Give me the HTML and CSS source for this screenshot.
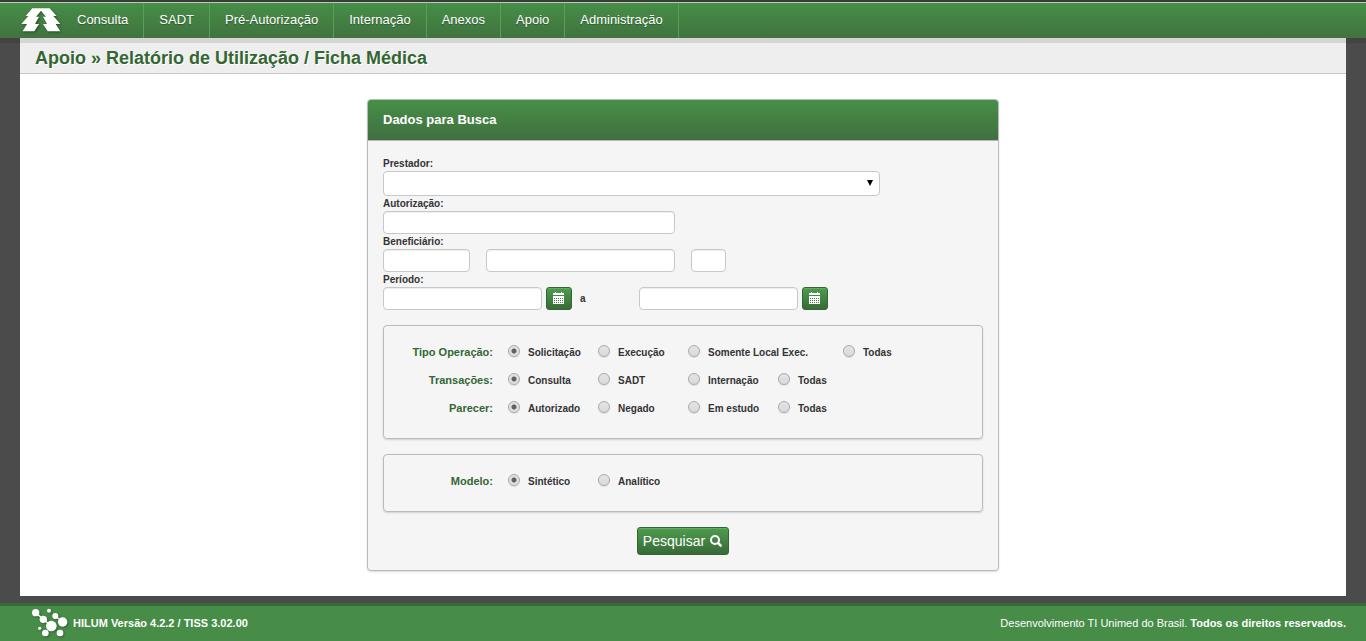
FILE: index.html
```html
<!DOCTYPE html>
<html lang="pt-BR">
<head>
<meta charset="utf-8">
<meta name="viewport" content="width=device-width, initial-scale=1">
<title>Relatório de Utilização / Ficha Médica</title>
<link rel="stylesheet" href="styles.css">
</head>
<body>
<header class="topbar">
  <a class="brand" href="#" aria-label="Início">
    <svg class="brand-logo" viewBox="0 0 120 72" aria-hidden="true">
      <path fill="#fff" d="M34 1H86L107 24H97L118 48H104L118 70H80L66 48H78L66 26H75L60 8L45 26H54L42 48H54L40 70H5L18 48H1L22 24H14Z"/>
    </svg>
  </a>
  <nav class="menu">
    <a href="#">Consulta</a>
    <a href="#">SADT</a>
    <a href="#">Pré-Autorização</a>
    <a href="#">Internação</a>
    <a href="#">Anexos</a>
    <a href="#">Apoio</a>
    <a href="#">Administração</a>
  </nav>
</header>

<main class="page">
  <h1 class="page-title">Apoio » Relatório de Utilização / Ficha Médica</h1>
  <form class="panel">
    <h2 class="panel-title">Dados para Busca</h2>
    <div class="panel-body">
      <label class="field-label" for="prestador">Prestador:</label>
      <div class="select-wrap">
        <select class="select" id="prestador"><option></option></select>
        <svg class="select-arrow" viewBox="0 0 6 6" aria-hidden="true"><path d="M0 0H6L3 6Z"/></svg>
      </div>
      <label class="field-label" for="autorizacao">Autorização:</label>
      <div class="field-row"><input class="input input-auth" id="autorizacao" type="text"></div>
      <label class="field-label" for="beneficiario">Beneficiário:</label>
      <div class="field-row field-row-wide">
        <input class="input input-unit" id="beneficiario" type="text">
        <input class="input input-card" type="text" aria-label="Número do beneficiário">
        <input class="input input-digit" type="text" aria-label="Dígito do beneficiário">
      </div>
      <label class="field-label" for="inicio">Período:</label>
      <div class="field-row">
        <input class="input input-date" id="inicio" type="text">
        <button class="btn btn-date" type="button" aria-label="Escolher data inicial">
          <svg class="icon-calendar" viewBox="0 0 11 12" aria-hidden="true" shape-rendering="crispEdges"><path fill="#fff" d="M0 1H2V0H3V1H8V0H9V1H11V3H0ZM0 4H11V12H0Z"/><path stroke="#3b7a3b" stroke-dasharray="1 1" d="M1 6.5H10M1 8.5H10M1 10.5H10"/></svg>
        </button>
        <label class="until" for="fim">a</label>
        <input class="input input-date" id="fim" type="text">
        <button class="btn btn-date" type="button" aria-label="Escolher data final">
          <svg class="icon-calendar" viewBox="0 0 11 12" aria-hidden="true" shape-rendering="crispEdges"><path fill="#fff" d="M0 1H2V0H3V1H8V0H9V1H11V3H0ZM0 4H11V12H0Z"/><path stroke="#3b7a3b" stroke-dasharray="1 1" d="M1 6.5H10M1 8.5H10M1 10.5H10"/></svg>
        </button>
      </div>

      <div class="box">
        <div class="options" role="radiogroup" aria-labelledby="g-op">
          <span class="options-title" id="g-op">Tipo Operação:</span>
          <label class="option"><input class="radio" type="radio" name="operacao" checked>Solicitação</label>
          <label class="option"><input class="radio" type="radio" name="operacao">Execução</label>
          <label class="option option-wide"><input class="radio" type="radio" name="operacao">Somente Local Exec.</label>
          <label class="option"><input class="radio" type="radio" name="operacao">Todas</label>
        </div>
        <div class="options" role="radiogroup" aria-labelledby="g-tr">
          <span class="options-title" id="g-tr">Transações:</span>
          <label class="option"><input class="radio" type="radio" name="transacoes" checked>Consulta</label>
          <label class="option"><input class="radio" type="radio" name="transacoes">SADT</label>
          <label class="option"><input class="radio" type="radio" name="transacoes">Internação</label>
          <label class="option"><input class="radio" type="radio" name="transacoes">Todas</label>
        </div>
        <div class="options" role="radiogroup" aria-labelledby="g-pa">
          <span class="options-title" id="g-pa">Parecer:</span>
          <label class="option"><input class="radio" type="radio" name="parecer" checked>Autorizado</label>
          <label class="option"><input class="radio" type="radio" name="parecer">Negado</label>
          <label class="option"><input class="radio" type="radio" name="parecer">Em estudo</label>
          <label class="option"><input class="radio" type="radio" name="parecer">Todas</label>
        </div>
      </div>

      <div class="box">
        <div class="options" role="radiogroup" aria-labelledby="g-mo">
          <span class="options-title" id="g-mo">Modelo:</span>
          <label class="option"><input class="radio" type="radio" name="modelo" checked>Sintético</label>
          <label class="option"><input class="radio" type="radio" name="modelo">Analítico</label>
        </div>
      </div>

      <div class="actions">
        <button class="btn btn-search" type="submit">Pesquisar
          <svg class="icon-search" viewBox="0 0 12 12" aria-hidden="true"><circle cx="5" cy="5" r="4" fill="none" stroke="#fff" stroke-width="2"/><path stroke="#fff" stroke-width="2.4" stroke-linecap="round" d="M8.2 8.2L10.7 10.7"/></svg>
        </button>
      </div>
    </div>
  </form>
</main>

<footer class="footer">
  <div class="footer-brand">
    <svg class="footer-logo" viewBox="0 0 108 90" aria-hidden="true">
      <g fill="#fff"><circle cx="11" cy="14" r="11"/><circle cx="34" cy="34" r="11"/><circle cx="51" cy="8" r="6"/><circle cx="70" cy="24" r="9"/><circle cx="58" cy="54" r="16"/><circle cx="92" cy="42" r="14"/><circle cx="23" cy="61" r="5"/><circle cx="40" cy="75" r="10"/><circle cx="84" cy="75" r="10"/></g>
      <path fill="none" stroke="#fff" stroke-width="4" d="M11 14L58 54M70 24L92 42"/>
    </svg>
    <strong>HILUM Versão 4.2.2 / TISS 3.02.00</strong>
  </div>
  <p class="credits"><span>Desenvolvimento TI Unimed do Brasil.</span> <strong>Todos os direitos reservados.</strong></p>
</footer>
</body>
</html>
```

FILE: styles.css
```css
* {
  box-sizing: border-box;
}

body {
  display: flex;
  flex-direction: column;
  min-height: 100vh;
  margin: 0;
  background: #4b4b4b;
  color: #333;
  font-family: "Liberation Sans", Arial, sans-serif;
  font-size: 10px;
}

.topbar {
  position: relative;
  display: flex;
  height: 38px;
  padding-left: 20px;
  border-top: 2px solid #3b3b3b;
  background: linear-gradient(#478e47, #407340);
  box-shadow: inset 0 1px #b5d0b3, 0 5px rgba(0, 0, 0, 0.1);
}

.brand {
  display: flex;
  align-items: center;
  padding: 0 1px;
}

.brand-logo {
  width: 40px;
  height: 24px;
  filter: drop-shadow(1px 1px 1px rgba(0, 0, 0, 0.4));
}

.menu {
  display: flex;
  padding-top: 1px;
}

.menu a {
  padding: 0 15px;
  border-right: 1px solid #55a155;
  color: #fff;
  font-size: 13px;
  line-height: 33px;
  text-decoration: none;
  text-shadow: 0 1px 1px rgba(0, 0, 0, 0.3);
}

.page {
  flex: 1;
  margin: 0 20px 7px;
  padding-bottom: 25px;
  background: #fff;
}

.page-title {
  margin: 0;
  padding: 5px 15px 0;
  border-bottom: 1px solid #c8c8c8;
  background: #eee;
  color: #336633;
  font-size: 18px;
  line-height: 30px;
  text-shadow: 1px 1px #fff;
}

.panel {
  width: 632px;
  max-width: 100%;
  margin: 25px auto 0;
  border: 1px solid #bbb;
  border-radius: 4px;
  background: #f5f5f5;
  box-shadow: 0 1px 2px rgba(0, 0, 0, 0.15);
}

.panel-title {
  margin: 0;
  padding: 0 15px;
  border-bottom: 1px solid #b5b5b5;
  border-radius: 3px 3px 0 0;
  background: linear-gradient(#478e47, #407040);
  color: #fff;
  font-size: 13px;
  line-height: 40px;
}

.panel-body {
  padding: 15px;
}

.field-label {
  display: block;
  font-weight: bold;
  line-height: 15px;
}

.field-row {
  display: flex;
  flex-wrap: wrap;
  align-items: center;
  gap: 4px;
}

.field-row-wide {
  gap: 16px;
}

.input,
.select {
  height: 23px;
  border: 1px solid #c8c8c8;
  border-radius: 4px;
  background: #fff;
  font: inherit;
  box-shadow: inset 0 1px 1px rgba(0, 0, 0, 0.07);
}

.select-wrap {
  position: relative;
  width: 497px;
  max-width: 100%;
}

.select {
  display: block;
  width: 100%;
  height: 25px;
  appearance: none;
  box-shadow: none;
}

.select-arrow {
  position: absolute;
  top: 9px;
  right: 7px;
  width: 6px;
  height: 6px;
  pointer-events: none;
}

.input-auth {
  width: 292px;
}

.input-unit {
  width: 87px;
}

.input-card {
  width: 189px;
}

.input-digit {
  width: 35px;
}

.input-date {
  width: 159px;
}

.until {
  width: 59px;
  padding-left: 4px;
  font-weight: bold;
}

.btn {
  display: flex;
  align-items: center;
  justify-content: center;
  border: 1px solid #336633;
  border-radius: 3px;
  background: linear-gradient(#4d9d4d, #386a38);
  box-shadow: inset 0 1px rgba(255, 255, 255, 0.15);
  color: #fff;
  font-family: inherit;
}

.btn-date {
  width: 26px;
  height: 23px;
  padding: 0 1px 1px 0;
}

.icon-calendar {
  width: 11px;
  height: 12px;
}

.box {
  margin-top: 15px;
  padding: 12px 0 16px;
  border: 1px solid #bbb;
  border-radius: 4px;
  box-shadow: 0 1px 2px rgba(0, 0, 0, 0.15);
}

.options {
  display: flex;
  flex-wrap: wrap;
  align-items: center;
  min-height: 28px;
}

.options-title {
  width: 109px;
  margin-right: 15px;
  color: #336633;
  font-size: 11px;
  font-weight: bold;
  text-align: right;
}

.option {
  display: flex;
  align-items: center;
  gap: 8px;
  width: 90px;
  font-weight: bold;
  white-space: nowrap;
}

.option-wide {
  width: 155px;
}

.radio {
  width: 12px;
  height: 12px;
  margin: 0 0 2px;
  border: 1px solid #aaa;
  border-radius: 50%;
  appearance: none;
  background: linear-gradient(#e4e4e4, #dadada);
  box-shadow: 0 1px 1px rgba(0, 0, 0, 0.1);
}

.radio:checked {
  background: radial-gradient(circle, #606060 0 2px, #e0e0e0 3px);
}

.actions {
  display: flex;
  justify-content: center;
  margin-top: 15px;
}

.btn-search {
  gap: 5px;
  height: 28px;
  padding: 0 6px 0 5px;
  font-size: 14px;
}

.icon-search {
  width: 12px;
  height: 12px;
}

.footer {
  display: flex;
  align-items: center;
  justify-content: space-between;
  height: 38px;
  padding: 0 20px 1px 32px;
  border-top: 3px solid #3a6a3a;
  background: #478c47;
  color: #fff;
  font-size: 11px;
}

.footer-brand {
  display: flex;
  align-items: center;
  gap: 5px;
}

.footer-logo {
  width: 36px;
  height: 30px;
  filter: drop-shadow(1px 1px 1px rgba(0, 0, 0, 0.3));
}

.credits {
  margin: 0;
}
```
